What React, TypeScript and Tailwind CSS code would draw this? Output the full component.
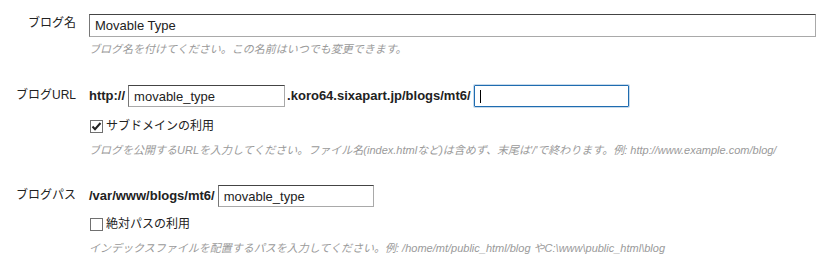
import React from 'react'

const jp = '"Liberation Sans", Arial, "Noto Sans CJK JP", sans-serif'

const inputCls =
  'h-[22px] px-[5px] text-[13px] text-[#222] bg-white border border-[#a9a9a9] border-t-[#444] border-l-[#777] ' +
  'outline-none'

export default function App() {
  return (
    <div className="w-[839px] h-[265px] bg-white text-[#222] overflow-hidden" style={{ fontFamily: jp }}>
      <div className="pt-[13px] pr-[23px]">
        <Section label="ブログ名">
          <input
            readOnly
            value="Movable Type"
            className={inputCls + ' w-full h-[23px]'}
          />
          <Hint className="mt-[4px]">ブログ名を付けてください。この名前はいつでも変更できます。</Hint>
        </Section>

        <div className="mt-[28px]">
          <Section label="ブログURL">
            <div className="flex items-center h-[22px]">
              <span className="text-[13px] font-bold mr-[3px]">http://</span>
              <input readOnly value="movable_type" className={inputCls + ' w-[157px]'} />
              <span className="text-[13px] font-bold ml-[2px] mr-[3px]">.koro64.sixapart.jp/blogs/mt6/</span>
              <div className="relative w-[155px] h-[22px] border border-[#1f6cb0] rounded-[1px] shadow-[0_0_0_1px_rgba(31,108,176,0.25)]">
                <div className="absolute left-[5px] top-[4px] w-px h-[13px] bg-black" />
              </div>
            </div>
            <Check checked label="サブドメインの利用" className="mt-[11px]" />
            <Hint className="mt-[8px]">
              ブログを公開するURLを入力してください。ファイル名(index.htmlなど)は含めず、末尾は'/'で終わります。例: http://www.example.com/blog/
            </Hint>
          </Section>
        </div>

        <div className="mt-[27px]">
          <Section label="ブログパス">
            <div className="flex items-center h-[22px]">
              <span className="text-[13px] font-bold mr-[3px]">/var/www/blogs/mt6/</span>
              <input readOnly value="movable_type" className={inputCls + ' w-[156px]'} />
            </div>
            <Check label="絶対パスの利用" className="mt-[9px]" />
            <Hint className="mt-[8px]">
              インデックスファイルを配置するパスを入力してください。例: /home/mt/public_html/blog やC:\www\public_html\blog
            </Hint>
          </Section>
        </div>
      </div>
    </div>
  )
}

function Section({ label, children }: { label: string; children: React.ReactNode }) {
  return (
    <div className="flex items-start">
      <div className="w-[76px] shrink-0 text-right text-[12px] leading-[21px] text-[#222]">{label}</div>
      <div className="ml-[13px] flex-1">{children}</div>
    </div>
  )
}

function Hint({ children, className = '' }: { children: React.ReactNode; className?: string }) {
  return (
    <div className={'text-[11px] italic leading-[16px] text-[#9a9a9a] whitespace-nowrap ' + className}>
      {children}
    </div>
  )
}

function Check({ label, checked, className = '' }: { label: string; checked?: boolean; className?: string }) {
  return (
    <label className={'flex items-center h-[16px] ' + className}>
      <span className="ml-[1px] w-[13px] h-[13px] border border-[#707070] bg-white flex items-center justify-center">
        {checked && (
          <svg width="11" height="11" viewBox="0 0 11 11">
            <path d="M1.5 5.5 L4 8.2 L9.5 2" fill="none" stroke="#222" strokeWidth="2" />
          </svg>
        )}
      </span>
      <span className="ml-[3px] text-[12px] text-[#222]">{label}</span>
    </label>
  )
}
